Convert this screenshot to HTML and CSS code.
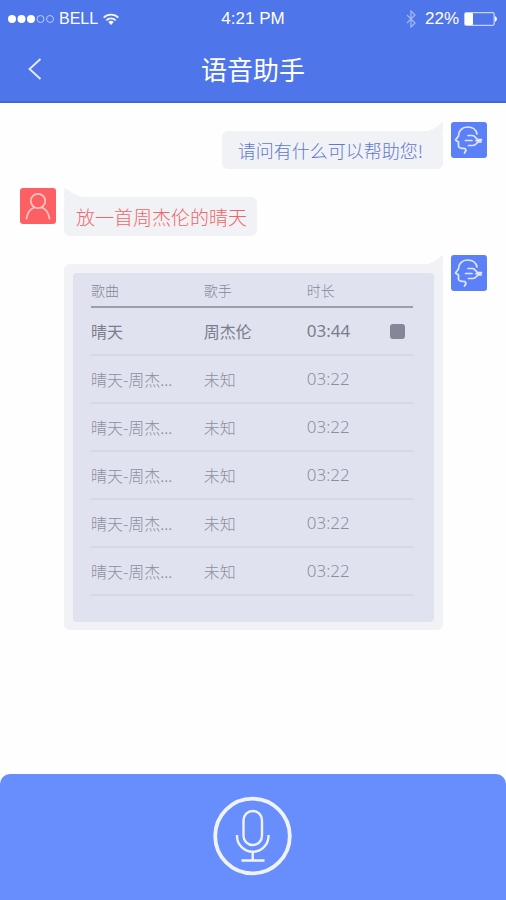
FILE: index.html
```
<!DOCTYPE html>
<html lang="zh-CN">
<head>
<meta charset="utf-8">
<meta name="viewport" content="width=device-width, initial-scale=1">
<title>语音助手</title>
<link rel="stylesheet" href="styles.css">
</head>
<body>
<header class="header">
  <div class="status">
    <div class="status-left">
      <svg class="signal" viewBox="0 0 46 10" width="46" height="10" aria-hidden="true">
        <g fill="#fff"><circle cx="4" cy="5" r="4"/><circle cx="13.500" cy="5" r="4"/><circle cx="23" cy="5" r="4"/></g>
        <g fill="none" stroke="#bccbfb"><circle cx="32.500" cy="5" r="3.500"/><circle cx="42" cy="5" r="3.500"/></g>
      </svg>
      <span>BELL</span>
      <svg viewBox="0 0 16 12" width="16" height="12" fill="none" stroke="#f2f6ff" stroke-width="1.800" aria-hidden="true">
        <path d="M.7 4.600a10.500 10.500 0 0 1 14.600 0M3.300 7.300a6.800 6.800 0 0 1 9.400 0"/>
        <path d="M5.300 9a4 4 0 0 1 5.400 0L8 12z" fill="#fff" stroke="none"/>
      </svg>
    </div>
    <span class="clock">4:21 PM</span>
    <div class="status-right">
      <svg viewBox="0 0 10 18" width="10" height="18" fill="none" stroke="#a0b5f6" stroke-width="1.300" aria-hidden="true"><path d="M1 5l8 8-4 4V1l4 4-8 8"/></svg>
      <span class="percent">22%</span>
      <svg viewBox="0 0 34 14" width="34" height="14" aria-hidden="true">
        <rect x=".7" y=".7" width="29.500" height="12.600" rx="1.500" fill="none" stroke="#c6d3fc" stroke-width="1.300"/>
        <rect x="1" y="1" width="8" height="12" rx="1" fill="#fff"/>
        <path d="M31 4q4 3 0 6z" fill="#fff"/>
      </svg>
    </div>
  </div>
  <div class="nav">
    <button class="back" type="button" aria-label="返回">
      <svg viewBox="0 0 14 22" width="14" height="22" fill="none" stroke="#e8eeff" stroke-width="1.800"><path d="M12.500 1L1.500 11l11 10"/></svg>
    </button>
    <h1 class="title">语音助手</h1>
  </div>
</header>

<main class="chat">
  <div class="message message-assistant">
    <div class="bubble bubble-text">请问有什么可以帮助您!<svg class="tail" viewBox="0 0 24 11" width="24" height="11" aria-hidden="true"><path d="M0 11Q16 9 23 0Q24 0 24 3V11z"/></svg></div>
    <svg class="avatar" viewBox="0 0 36 36" role="img" aria-label="语音助手">
      <rect width="36" height="36" rx="3" fill="#5b80f8"/>
      <g fill="none" stroke="#dfe7ff" stroke-width="1.700" stroke-linecap="round" stroke-linejoin="round">
        <path d="M26 12C25 7 21 5 16.500 5C11 5 7.500 9 7.500 14L4.500 18L7.500 20V24C7.500 26 9 26.500 14 26.500L15 28.500L13.500 31"/>
        <path d="M17 13.500h4.500c3 0 3 4 6 4h3M14.500 18.500H21M17.500 23.500h4.500c3 0 3-2.500 5.500-3.500h2.500M25 18.700h5"/>
      </g>
    </svg>
  </div>

  <div class="message message-user">
    <svg class="avatar" viewBox="0 0 36 36" role="img" aria-label="我">
      <rect width="36" height="36" rx="3" fill="#fc6064"/>
      <g fill="none" stroke="#ffc6c0" stroke-width="1.800" stroke-linecap="round"><circle cx="18" cy="13" r="7.200"/><path d="M6.500 30.500C7.500 25 10 21 14 19.500M22 19.500C26 21 28.500 25 29.500 30.500"/></g>
    </svg>
    <div class="bubble bubble-text">放一首周杰伦的晴天<svg class="tail" viewBox="0 0 24 11" width="24" height="11" aria-hidden="true"><path d="M24 11Q12 8 1 0Q0 0 0 3V11z"/></svg></div>
  </div>

  <div class="message message-assistant message-list">
    <div class="bubble bubble-list">
      <div class="panel">
        <table class="songs">
          <thead>
            <tr><th class="col-song" scope="col">歌曲</th><th class="col-singer" scope="col">歌手</th><th class="col-time" scope="col">时长</th><td></td></tr>
          </thead>
          <tbody>
            <tr class="playing"><td>晴天</td><td>周杰伦</td><td class="time">03:44</td><td class="action"><button class="stop" type="button" aria-label="停止"></button></td></tr>
            <tr><td>晴天-周杰...</td><td>未知</td><td class="time">03:22</td><td></td></tr>
            <tr><td>晴天-周杰...</td><td>未知</td><td class="time">03:22</td><td></td></tr>
            <tr><td>晴天-周杰...</td><td>未知</td><td class="time">03:22</td><td></td></tr>
            <tr><td>晴天-周杰...</td><td>未知</td><td class="time">03:22</td><td></td></tr>
            <tr><td>晴天-周杰...</td><td>未知</td><td class="time">03:22</td><td></td></tr>
          </tbody>
        </table>
      </div>
      <svg class="tail" viewBox="0 0 24 11" width="24" height="11" aria-hidden="true"><path d="M0 11Q16 9 23 0Q24 0 24 3V11z"/></svg>
    </div>
    <svg class="avatar" viewBox="0 0 36 36" role="img" aria-label="语音助手">
      <rect width="36" height="36" rx="3" fill="#5b80f8"/>
      <g fill="none" stroke="#dfe7ff" stroke-width="1.700" stroke-linecap="round" stroke-linejoin="round">
        <path d="M26 12C25 7 21 5 16.500 5C11 5 7.500 9 7.500 14L4.500 18L7.500 20V24C7.500 26 9 26.500 14 26.500L15 28.500L13.500 31"/>
        <path d="M17 13.500h4.500c3 0 3 4 6 4h3M14.500 18.500H21M17.500 23.500h4.500c3 0 3-2.500 5.500-3.500h2.500M25 18.700h5"/>
      </g>
    </svg>
  </div>
</main>

<footer class="voice-bar">
  <button class="mic" type="button" aria-label="按住说话">
    <svg viewBox="0 0 80 80" width="80" height="80" fill="none" stroke="#f0f3ff">
      <circle cx="39.500" cy="40" r="37.300" stroke-width="3.800"/>
      <g stroke-width="2.400"><rect x="30.500" y="15" width="18.500" height="34" rx="9.250"/><path d="M24 39v1a15.700 15.700 0 0 0 31.500 0v-1M39.700 56v8M28.500 64.500h23"/></g>
    </svg>
  </button>
</footer>
</body>
</html>
```

FILE: styles.css
```
* {
  box-sizing: border-box;
}

body {
  margin: 0;
  min-height: 100vh;
  display: flex;
  flex-direction: column;
  background: #fefefe;
  font-family: "Noto Sans", "Noto Sans CJK SC", sans-serif;
}

button {
  padding: 0;
  border: 0;
  background: none;
  cursor: pointer;
}

svg {
  display: block;
  flex: none;
}

.header {
  background: #4e75e9;
  border-bottom: 2px solid #4065dc;
  color: #fff;
}

.status {
  display: grid;
  grid-template-columns: 1fr auto 1fr;
  align-items: center;
  height: 37px;
  padding: 0 8px;
  font: 17px/20px "Liberation Sans", sans-serif;
}

.status-left,
.status-right {
  display: flex;
  align-items: center;
  gap: 5px;
}

.status-left {
  font-size: 16px;
}

.status-right {
  justify-content: flex-end;
}

.percent {
  margin-left: 4px;
}

.nav {
  display: grid;
  grid-template-columns: 54px 1fr 54px;
  align-items: center;
  height: 64px;
}

.back {
  display: flex;
  align-items: center;
  height: 44px;
  padding-left: 28px;
}

.title {
  margin: 0;
  text-align: center;
  font-size: 26px;
  line-height: 36px;
  font-weight: 400;
  font-family: "Noto Sans CJK SC", sans-serif;
}

.chat {
  flex: 1;
  padding: 19px 19px 32px 20px;
}

.message {
  display: flex;
  align-items: flex-start;
  gap: 8px;
}

.message-assistant {
  justify-content: flex-end;
}

.message-user {
  margin-top: 19px;
}

.message-list {
  margin-top: 19px;
  padding-left: 44px;
}

.avatar {
  width: 36px;
  height: 36px;
}

.bubble {
  position: relative;
  margin-top: 9px;
  border-radius: 6px;
  background: #f1f2f5;
}

.bubble-text {
  padding: 0 20px 0 16px;
  font: 300 18px/38px "Noto Sans CJK SC", sans-serif;
  color: #6078d0;
}

.message-user .bubble-text {
  padding: 0 10px 0 12px;
  font-size: 19px;
  line-height: 39px;
  color: #ee6668;
}

.tail {
  position: absolute;
  top: -9px;
  right: 0;
  fill: #f1f2f5;
}

.message-user .tail {
  right: auto;
  left: 0;
}

.bubble-list {
  flex: 1;
  padding: 9px 9px 8px;
}

.panel {
  padding: 0 21px 26px 18px;
  border-radius: 4px;
  background: #e0e3ef;
}

.songs {
  width: 100%;
  table-layout: fixed;
  border-collapse: collapse;
  font-family: "Noto Sans CJK SC", sans-serif;
  font-weight: 300;
  font-size: 16px;
  line-height: 24px;
  color: #8d8f9f;
}

.songs th,
.songs td {
  padding: 0;
  text-align: left;
  white-space: nowrap;
}

.songs thead tr {
  height: 34px;
  border-bottom: 2px solid #9c9eae;
}

.songs th {
  font-size: 14px;
  font-weight: 300;
  color: #858797;
}

.songs tbody tr {
  height: 48px;
  border-bottom: 2px solid #d6d8e4;
}

.songs .playing {
  color: #7b7d8c;
}

.songs .playing td {
  font-weight: 400;
}

.col-song {
  width: 35%;
}

.col-singer {
  width: 32%;
}

.col-time {
  width: 20%;
}

.songs .time {
  font-family: "Noto Sans", sans-serif;
  font-size: 17px;
}

.songs .action {
  padding-right: 8px;
}

.stop {
  display: block;
  width: 15px;
  height: 15px;
  margin-left: auto;
  border-radius: 3px;
  background: #858697;
}

.voice-bar {
  display: flex;
  justify-content: center;
  padding: 22px 0 24px;
  border-radius: 10px 10px 0 0;
  background: #688dfd;
}

.mic {
  border-radius: 50%;
}
```
